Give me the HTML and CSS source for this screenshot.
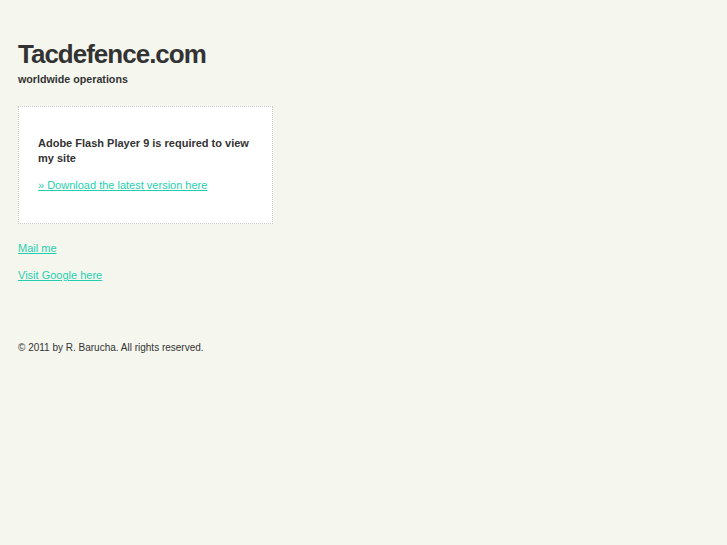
FILE: index.html
```html
<html>
    <head>
        <title>Tacdefence.com</title>
        <link rel="stylesheet" href="styles.css">
    </head>
    <body>
        <div id="page">
            <h1 class="title">Tacdefence.com</h1>
            <p class="tagline">worldwide operations</p>
            <div id="flash">
                <p class="notice">Adobe Flash Player 9 is required to view my site</p>
                <p><a href="#">&raquo; Download the latest version here</a></p>
            </div>
            <p class="link"><a href="#">Mail me</a></p>
            <p class="link"><a href="#">Visit Google here</a></p>
            <p class="footer">&copy; 2011 by R. Barucha. All rights reserved.</p>
        </div>
    </body>
</html>
```

FILE: styles.css
```css
body{
    margin: 0;
    background: #f5f7ef;
    font-family: "Liberation Sans", Arial, sans-serif;
    font-size: 11px;
    color: #333;
}
#page{
    padding: 38px 18px;
}
.title{
    margin: 0;
    font-size: 26px;
    font-weight: bold;
    letter-spacing: -1px;
    line-height: 32px;
    color: #333;
}
.tagline{
    margin: 2px 0 0 0;
    font-size: 10.7px;
    font-weight: bold;
    line-height: 14px;
}
#flash{
    margin-top: 20px;
    width: 215px;
    padding: 29px 19px 30px 19px;
    background: #fff;
    border: 1px dotted #ccc;
}
#flash p{
    margin: 0;
    line-height: 15px;
}
#flash .notice{
    font-weight: bold;
    margin-bottom: 12px;
}
a{
    color: #1fcfae;
}
.link{
    margin: 16px 0 0 0;
    line-height: 16px;
}
.link + .link{
    margin-top: 11px;
}
.footer{
    margin: 57px 0 0 0;
    font-size: 10px;
    line-height: 16px;
}
```
